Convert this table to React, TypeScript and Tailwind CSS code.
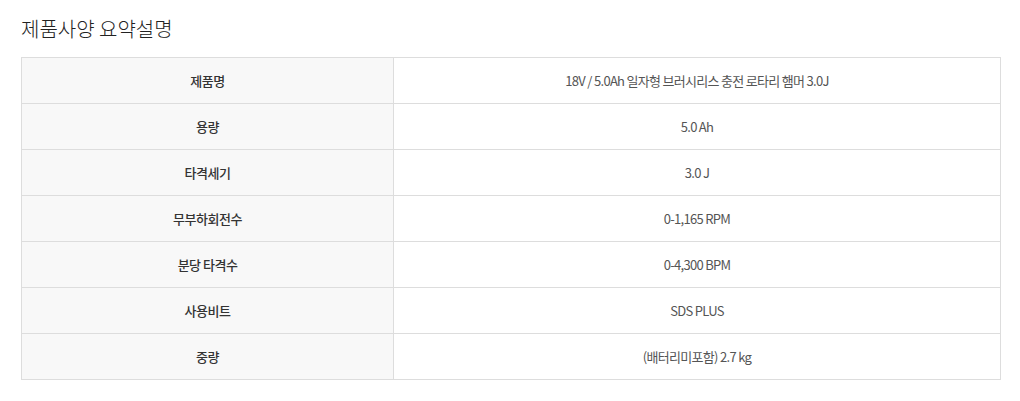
import React from "react";

const rows: [string, string][] = [
  ["제품명", "18V / 5.0Ah 일자형 브러시리스 충전 로타리 햄머 3.0J"],
  ["용량", "5.0 Ah"],
  ["타격세기", "3.0 J"],
  ["무부하회전수", "0-1,165 RPM"],
  ["분당 타격수", "0-4,300 BPM"],
  ["사용비트", "SDS PLUS"],
  ["중량", "(배터리미포함) 2.7 kg"],
];

export default function App() {
  return (
    <div
      className="w-[1020px] h-[401px] bg-white"
      style={{ fontFamily: '"Noto Sans CJK KR", "Noto Sans", sans-serif' }}
    >
      <div className="pl-[21px] pt-[15px]">
        <h2 className="text-[20px] leading-[28px] text-[#222] font-light tracking-[0px]">
          제품사양 요약설명
        </h2>
        <table className="mt-[14px] w-[980px] border-collapse border border-[#dddddd]">
          <tbody>
            {rows.map(([k, v]) => (
              <tr key={k} className="h-[46px]">
                <th className="w-[372px] bg-[#f8f8f8] border border-[#dddddd] text-[13px] font-medium text-[#333] text-center tracking-[-0.5px] p-0">
                  {k}
                </th>
                <td className="border border-[#dddddd] text-[13px] text-[#555] text-center tracking-[-0.7px] p-0">
                  {v}
                </td>
              </tr>
            ))}
          </tbody>
        </table>
      </div>
    </div>
  );
}
